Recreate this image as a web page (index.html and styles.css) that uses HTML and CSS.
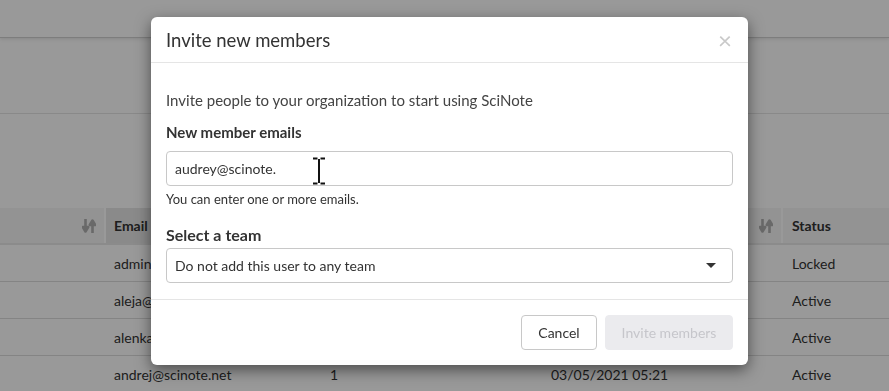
FILE: index.html
```html
<!DOCTYPE html>
<html lang="en">
<head>
  <meta charset="UTF-8">
  <title>Invite new members | SciNote</title>
  <link rel="stylesheet" href="styles.css">
</head>
<body>
  <div class="page">
    <div class="topbar"></div>
    <div class="toolbar"></div>
    <div class="users">
      <div class="row head">
        <div class="cell"><span class="sort"><svg width="14" height="16" viewBox="0 0 14 16"><path d="M3.5 1v11M0.8 9L3.5 13.5L6.2 9Z" /><path d="M10.5 15V4M7.8 7L10.5 2.5L13.2 7Z" /></svg></span></div>
        <div class="cell sorted">Email</div>
        <div class="cell"></div>
        <div class="cell"><span class="sort"><svg width="14" height="16" viewBox="0 0 14 16"><path d="M3.5 1v11M0.8 9L3.5 13.5L6.2 9Z" /><path d="M10.5 15V4M7.8 7L10.5 2.5L13.2 7Z" /></svg></span></div>
        <div class="cell">Status</div>
      </div>
      <div class="row">
        <div class="cell"></div>
        <div class="cell">admin@scinote.net</div>
        <div class="cell"></div>
        <div class="cell"></div>
        <div class="cell">Locked</div>
      </div>
      <div class="row">
        <div class="cell"></div>
        <div class="cell">aleja@scinote.net</div>
        <div class="cell"></div>
        <div class="cell"></div>
        <div class="cell">Active</div>
      </div>
      <div class="row">
        <div class="cell"></div>
        <div class="cell">alenka@scinote.net</div>
        <div class="cell"></div>
        <div class="cell"></div>
        <div class="cell">Active</div>
      </div>
      <div class="row">
        <div class="cell"></div>
        <div class="cell">andrej@scinote.net</div>
        <div class="cell">1</div>
        <div class="cell">03/05/2021 05:21</div>
        <div class="cell">Active</div>
      </div>
    </div>
  </div>

  <div class="backdrop"></div>

  <div class="modal">
    <div class="modal-header">
      <h4 class="modal-title">Invite new members</h4>
      <span class="close">&times;</span>
    </div>
    <div class="modal-body">
      <p class="intro">Invite people to your organization to start using SciNote</p>
      <label class="field-label">New member emails</label>
      <div class="input-wrap">
        <div class="text-input">audrey@scinote.</div>
        <svg class="ibeam" width="14" height="28" viewBox="0 0 14 28"><path d="M1 1.5h4.5M8.5 1.5H13M7 2v24M1 26.5h4.5M8.5 26.5H13" /></svg>
      </div>
      <div class="help">You can enter one or more emails.</div>
      <label class="field-label team-label">Select a team</label>
      <div class="select">
        <span>Do not add this user to any team</span>
        <span class="caret"></span>
      </div>
    </div>
    <div class="modal-footer">
      <button class="btn btn-default">Cancel</button>
      <button class="btn btn-primary" disabled>Invite members</button>
    </div>
  </div>
</body>
</html>
```

FILE: styles.css
```css
body {
  margin: 0;
  font-family: Lato, 'Open Sans', sans-serif;
  color: #333;
  background-color: #fff;
  overflow: hidden;
}

.page {
  height: 391px;
}

.topbar {
  height: 37px;
  border-bottom: 1px solid #d0d0d0;
  box-shadow: 0 1px 4px rgba(0, 0, 0, 0.12);
}

.toolbar {
  height: 75px;
  border-bottom: 1px solid #e4e4e4;
}

.users {
  margin-top: 94px;
}

.row {
  display: grid;
  grid-template-columns: 104px 214px 219px 238px 1fr;
  column-gap: 2px;
  height: 36px;
  border-bottom: 1px solid #dcdcdc;
  font-size: 14px;
}

.row .cell {
  display: flex;
  align-items: center;
  padding: 0 8px;
  white-space: nowrap;
}

.row .cell:last-child {
  padding-left: 9px;
}

.row.head {
  height: 35px;
  border-bottom: 2px solid #e8e8e8;
  font-weight: 700;
}

.row.head .cell {
  background-color: #f5f5f5;
}

.row.head .cell.sorted {
  background-color: #e6e6e6;
}

.sort {
  margin-left: auto;
  display: flex;
}

.sort svg {
  fill: #b0b0b0;
  stroke: #b0b0b0;
  stroke-width: 2.6;
  stroke-linejoin: round;
}

.backdrop {
  position: fixed;
  inset: 0;
  background-color: rgba(0, 0, 0, 0.4);
}

.modal {
  position: absolute;
  left: 151px;
  top: 17px;
  width: 597px;
  background-color: #fff;
  border-radius: 6px;
  box-shadow: 0 5px 15px rgba(0, 0, 0, 0.5);
}

.modal-header {
  display: flex;
  align-items: center;
  height: 45px;
  padding: 0 15px;
  border-bottom: 1px solid #e5e5e5;
}

.modal-title {
  margin: 0;
  font-size: 18.5px;
  font-weight: 400;
  color: #333;
}

.close {
  margin-left: auto;
  margin-right: 1px;
  font-size: 24px;
  line-height: 1;
  color: #c9c9c9;
}

.modal-body {
  padding: 15px 15px 16px;
  position: relative;
}

.intro {
  margin: 12px 0 12px;
  font-size: 15px;
  line-height: 20px;
  color: #444;
}

.field-label {
  display: block;
  font-size: 15px;
  font-weight: 700;
  line-height: 20px;
  margin-bottom: 9px;
}

.team-label {
  font-size: 16px;
  margin-top: 17px;
  margin-bottom: 3px;
}

.input-wrap {
  position: relative;
}

.text-input,
.select {
  box-sizing: border-box;
  height: 35px;
  border: 1px solid #c8c8c8;
  border-radius: 4px;
  padding: 0 8px;
  display: flex;
  align-items: center;
  font-size: 14px;
  color: #333;
}

.ibeam {
  position: absolute;
  left: 146px;
  top: 6px;
  fill: none;
  stroke: #111;
  stroke-width: 2;
}

.help {
  margin-top: 4px;
  font-size: 13px;
  line-height: 18px;
}

.caret {
  margin-left: auto;
  margin-right: 8px;
  width: 0;
  height: 0;
  border-left: 5.5px solid transparent;
  border-right: 5.5px solid transparent;
  border-top: 5px solid #333;
}

.modal-footer {
  display: flex;
  justify-content: flex-end;
  gap: 8px;
  padding: 15px;
  border-top: 1px solid #e5e5e5;
}

.btn {
  box-sizing: border-box;
  height: 35px;
  border-radius: 4px;
  font-family: Lato, 'Open Sans', sans-serif;
  font-size: 14px;
  padding: 0;
  white-space: nowrap;
}

.btn-default {
  background-color: #fff;
  border: 1px solid #c8c8c8;
  color: #333;
  width: 76px;
}

.btn-primary {
  background-color: #ebebee;
  border: 1px solid #ebebee;
  color: #c6c6cb;
  width: 128px;
}
```
